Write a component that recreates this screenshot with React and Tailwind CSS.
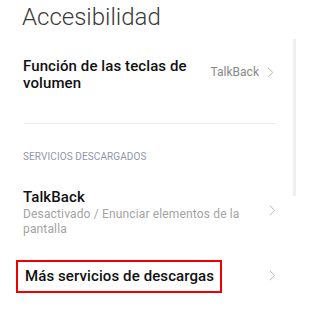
import React from "react";

function Chevron({ className = "" }) {
  return (
    <svg width="7" height="11" viewBox="0 0 7 11" className={className} fill="none">
      <path d="M1 0.8 L5.8 5.5 L1 10.2" stroke="#b5b5b5" strokeWidth="1" />
    </svg>
  );
}

export default function App() {
  return (
    <div
      className="relative w-[300px] h-[313px] overflow-hidden bg-white"
      style={{ fontFamily: "Roboto, 'Noto Sans', sans-serif" }}
    >
      <div className="pl-[22px] pt-[3px] text-[24px] leading-[28px] font-light text-[#3a3a3a]">
        Accesibilidad
      </div>

      <div className="ml-[23px] mr-[26px] mt-[27px] flex items-start justify-between">
        <div className="text-[15px] leading-[17px] font-medium text-[#111] tracking-[0.1px] w-[180px]">
          Función de las teclas de volumen
        </div>
        <div className="flex items-center mt-[6px] gap-[8px]">
          <span className="text-[12px] leading-[16px] text-[#888]">TalkBack</span>
          <Chevron />
        </div>
      </div>

      <div className="ml-[24px] mr-[24px] mt-[31px] h-px bg-[#ececec]" />

      <div className="ml-[23px] mt-[27px] text-[10px] leading-[12px] text-[#9095ad] tracking-[0.1px]">
        SERVICIOS DESCARGADOS
      </div>

      <div className="ml-[23px] mr-[24px] mt-[26px] flex items-center justify-between">
        <div>
          <div className="text-[15px] leading-[17px] font-medium text-[#111] tracking-[0.1px]">TalkBack</div>
          <div className="mt-[1px] text-[12px] leading-[14.5px] text-[#a3a3a3] tracking-[0.15px] w-[225px]">
            Desactivado / Enunciar elementos de la pantalla
          </div>
        </div>
        <Chevron className="mt-[-4px]" />
      </div>

      <div className="ml-[16px] mr-[24px] mt-[24px] flex items-center justify-between">
        <div className="border-2 border-[#f00000] w-[206px] h-[33px] flex items-center pl-[7px]">
          <span className="text-[15px] leading-[17px] font-medium text-[#111] tracking-[0.1px]">
            Más servicios de descargas
          </span>
        </div>
        <Chevron className="mt-[-2px]" />
      </div>

      <div className="absolute left-[293px] top-[39px] w-[3px] h-[157px] bg-[#efefef]" />
    </div>
  );
}
